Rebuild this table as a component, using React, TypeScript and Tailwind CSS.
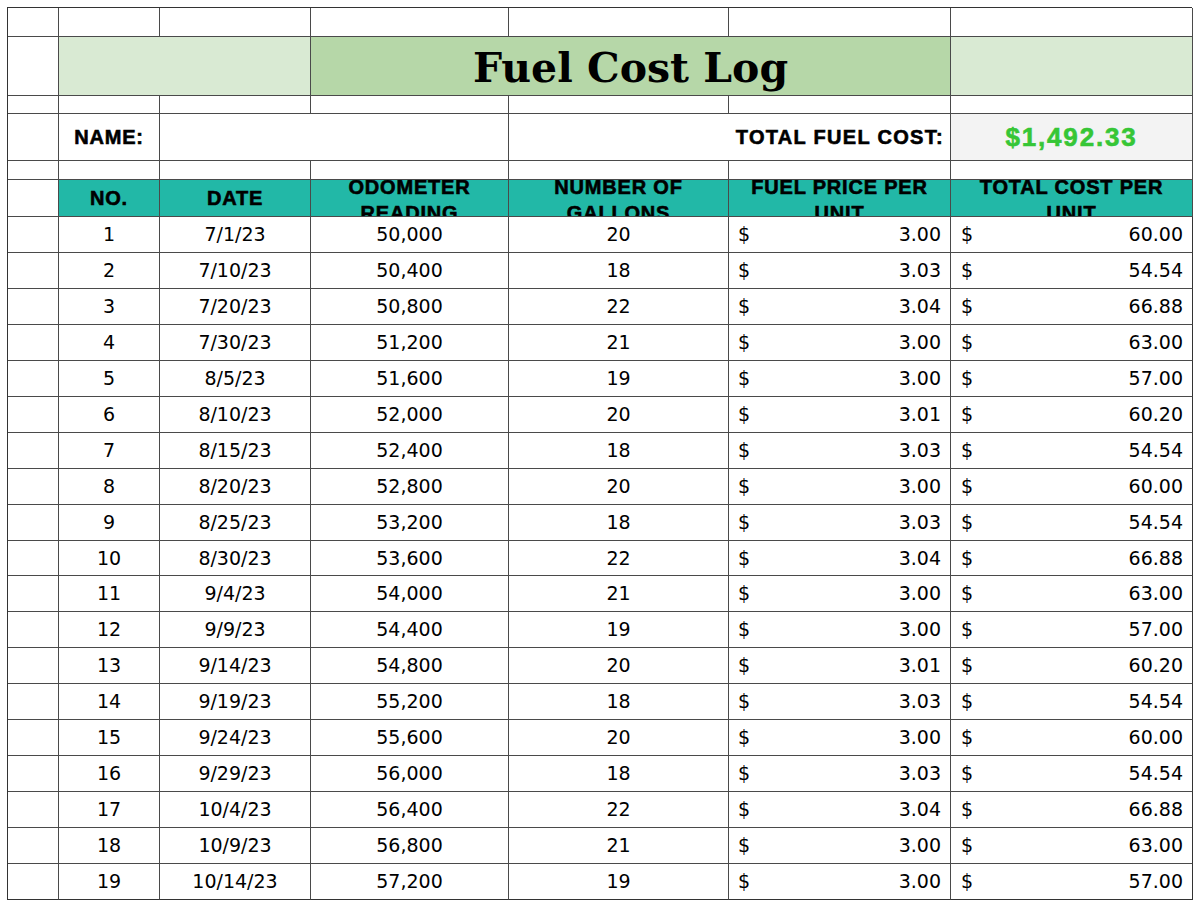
const rows: [string, string, string, string, string][] = [
  ['7/1/23', '50,000', '20', '3.00', '60.00'],
  ['7/10/23', '50,400', '18', '3.03', '54.54'],
  ['7/20/23', '50,800', '22', '3.04', '66.88'],
  ['7/30/23', '51,200', '21', '3.00', '63.00'],
  ['8/5/23', '51,600', '19', '3.00', '57.00'],
  ['8/10/23', '52,000', '20', '3.01', '60.20'],
  ['8/15/23', '52,400', '18', '3.03', '54.54'],
  ['8/20/23', '52,800', '20', '3.00', '60.00'],
  ['8/25/23', '53,200', '18', '3.03', '54.54'],
  ['8/30/23', '53,600', '22', '3.04', '66.88'],
  ['9/4/23', '54,000', '21', '3.00', '63.00'],
  ['9/9/23', '54,400', '19', '3.00', '57.00'],
  ['9/14/23', '54,800', '20', '3.01', '60.20'],
  ['9/19/23', '55,200', '18', '3.03', '54.54'],
  ['9/24/23', '55,600', '20', '3.00', '60.00'],
  ['9/29/23', '56,000', '18', '3.03', '54.54'],
  ['10/4/23', '56,400', '22', '3.04', '66.88'],
  ['10/9/23', '56,800', '21', '3.00', '63.00'],
  ['10/14/23', '57,200', '19', '3.00', '57.00'],
];

const cell = 'border-r border-b border-[#4a4a4a] overflow-hidden';
const heavy = "font-['Liberation_Sans',Arial,sans-serif] font-bold tracking-[0.8px] [-webkit-text-stroke:0.6px_currentcolor]";

function Blank({ h }: { h: string }) {
  return (
    <>
      {Array.from({ length: 7 }).map((_, i) => (
        <div key={i} className={`${cell} ${h}`} />
      ))}
    </>
  );
}

// header cell: long titles run onto a second line and get clipped, as in the sheet
function Head({ lines }: { lines: string[] }) {
  const pad = lines.length > 1 ? 'pt-[4px]' : '';
  return (
    <div className={`${cell} ${pad} h-[37px] bg-[#22b8a7] flex items-center justify-center`}>
      <div className={`${heavy} text-[20px] leading-[26px] text-black text-center whitespace-nowrap`}>
        {lines.map((l) => (
          <div key={l}>{l}</div>
        ))}
      </div>
    </div>
  );
}

export default function App() {
  return (
    <div className="w-[1200px] h-[906px] bg-white pt-[7px] pl-[7px]">
      <div className="grid grid-cols-[51px_101px_151px_198px_220px_222px_242px] w-[1185px] border-l border-t border-[#333] text-black font-['DejaVu_Sans',sans-serif] text-[19px]">
        <Blank h="h-[29px]" />

        {/* title */}
        <div className={`${cell} h-[59px]`} />
        <div className={`${cell} h-[59px] col-span-2 bg-[#d9ead3]`} />
        <div className={`${cell} h-[59px] col-span-3 bg-[#b6d7a8] flex items-center justify-center pt-[4px]`}>
          <span className="font-['DejaVu_Serif',serif] font-bold text-[41px] leading-none">Fuel Cost Log</span>
        </div>
        <div className={`${cell} h-[59px] bg-[#d9ead3]`} />

        <Blank h="h-[18px]" />

        {/* name / total */}
        <div className={`${cell} h-[47px]`} />
        <div className={`${cell} h-[47px] flex items-center justify-center`}>
          <span className={`${heavy} text-[20px]`}>NAME:</span>
        </div>
        <div className={`${cell} h-[47px] col-span-2`} />
        <div className={`${cell} h-[47px] col-span-2 flex items-center justify-end pr-[6px]`}>
          <span className={`${heavy} text-[20px] tracking-[1.3px]`}>TOTAL FUEL COST:</span>
        </div>
        <div className={`${cell} h-[47px] bg-[#f3f3f3] flex items-center justify-center`}>
          <span className={`${heavy} text-[26px] tracking-[1.8px] text-[#36c636]`}>$1,492.33</span>
        </div>

        <Blank h="h-[19px]" />

        {/* header */}
        <div className={`${cell} h-[37px]`} />
        <Head lines={['NO.']} />
        <Head lines={['DATE']} />
        <Head lines={['ODOMETER', 'READING']} />
        <Head lines={['NUMBER OF', 'GALLONS']} />
        <Head lines={['FUEL PRICE PER', 'UNIT']} />
        <Head lines={['TOTAL COST PER', 'UNIT']} />

        {rows.map(([date, odo, gal, price, total], i) => {
          const h = i % 10 === 9 ? 'h-[35px]' : 'h-[36px]';
          const last = i === rows.length - 1 ? 'border-b-[#333]' : '';
          return (
            <div key={date} className="contents">
              <div className={`${cell} ${h} ${last}`} />
              <div className={`${cell} ${h} ${last} flex items-center justify-center`}>{i + 1}</div>
              <div className={`${cell} ${h} ${last} flex items-center justify-center`}>{date}</div>
              <div className={`${cell} ${h} ${last} flex items-center justify-center`}>{odo}</div>
              <div className={`${cell} ${h} ${last} flex items-center justify-center`}>{gal}</div>
              <div className={`${cell} ${h} ${last} flex items-center justify-between pl-[9px] pr-[9px]`}>
                <span>$</span>
                <span>{price}</span>
              </div>
              <div className={`${cell} ${h} ${last} border-r-[#333] flex items-center justify-between pl-[10px] pr-[9px]`}>
                <span>$</span>
                <span>{total}</span>
              </div>
            </div>
          );
        })}
      </div>
    </div>
  );
}
